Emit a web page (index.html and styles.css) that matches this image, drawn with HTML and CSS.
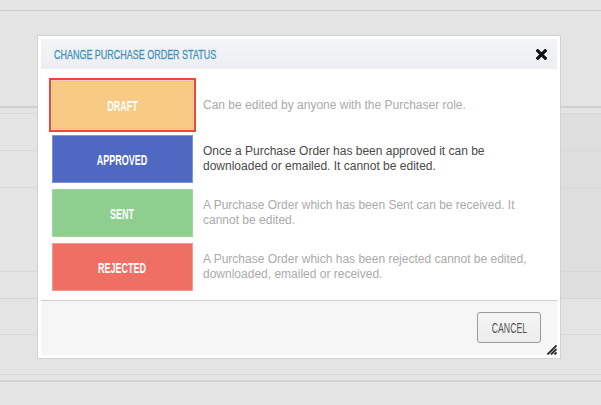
FILE: index.html
```html
<!DOCTYPE html>
<html>
<head>
<meta charset="utf-8">
<link rel="stylesheet" href="styles.css">
</head>
<body>
<div class="page">
  <div class="topbar"></div>
  <div class="band"></div>
  <div class="rows">
    <div class="row r1"></div>
    <div class="row r2"></div>
    <div class="row r3"></div>
    <div class="row r4"></div>
    <div class="row r5"></div>
    <div class="row r6"></div>
    <div class="row r7"></div>
    <div class="row r8"></div>
  </div>
  <div class="bottom"></div>
</div>

<div class="dialog">
  <div class="dialog-header">
    <span class="dialog-title">CHANGE PURCHASE ORDER STATUS</span>
    <svg class="close" width="11" height="11" viewBox="0 0 11 11"><path d="M1.8 1.8 L9.2 9.2 M9.2 1.8 L1.8 9.2" stroke="#111" stroke-width="3.2" stroke-linecap="square"/></svg>
  </div>
  <div class="dialog-body">
    <div class="status-row">
      <div class="status-btn draft selected"><span class="label">DRAFT</span></div>
      <div class="status-desc">Can be edited by anyone with the Purchaser role.</div>
    </div>
    <div class="status-row">
      <div class="status-btn approved"><span class="label">APPROVED</span></div>
      <div class="status-desc active">Once a Purchase Order has been approved it can be downloaded or emailed. It cannot be edited.</div>
    </div>
    <div class="status-row">
      <div class="status-btn sent"><span class="label">SENT</span></div>
      <div class="status-desc">A Purchase Order which has been Sent can be received. It cannot be edited.</div>
    </div>
    <div class="status-row">
      <div class="status-btn rejected"><span class="label">REJECTED</span></div>
      <div class="status-desc">A Purchase Order which has been rejected cannot be edited, downloaded, emailed or received.</div>
    </div>
  </div>
  <div class="dialog-footer">
    <button class="cancel"><span class="cancel-label">CANCEL</span></button>
  </div>
  <svg class="grip" width="12" height="12" viewBox="0 0 12 12"><path d="M11.5 2.5 L2.5 11.5 M11.5 6 L6 11.5 M11.5 9.5 L9.5 11.5" stroke="#2a2a2a" stroke-width="1.8"/></svg>
</div>
</body>
</html>
```

FILE: styles.css
```css
html, body {
  margin: 0;
  padding: 0;
}
body {
  width: 601px;
  height: 405px;
  overflow: hidden;
  background: #e4e4e4;
  position: relative;
  font-family: "Liberation Sans", Arial, sans-serif;
}
.page {
  display: flex;
  flex-direction: column;
}
.topbar {
  height: 10px;
  border-bottom: 1px solid #cbcbcb;
  background: #e4e4e4;
}
.band {
  height: 95px;
  border-bottom: 2px solid #d0d0d0;
}
.rows {
  display: flex;
  flex-direction: column;
}
.row {
  border-bottom: 1px solid #d9d9d9;
  background: #e4e4e4;
}
.r1 { height: 5px; }
.r2, .r3, .r4, .r5, .r6 { background: linear-gradient(90deg, #e4e4e4 561px, #dedede 561px); }
.r2 { height: 36px; }
.r3 { height: 36px; }
.r4 { height: 36px; border-bottom-color: transparent; }
.r5 { height: 46px; }
.r6 { height: 26px; border-bottom-color: #d6d6d6; }
.r7 { height: 35px; }
.r8 { height: 39px; }
.bottom {
  border-top: 2px solid #d2d2d2;
  margin-top: 5px;
  height: 30px;
}

.dialog {
  position: absolute;
  left: 37px;
  top: 35px;
  width: 516px;
  height: 316px;
  padding: 3px;
  background: #fff;
  border: 1px solid #d2d2d2;
  display: flex;
  flex-direction: column;
}
.dialog-header {
  height: 30px;
  flex: none;
  background: linear-gradient(#f4f5f7, #eceef1);
  display: flex;
  align-items: center;
  justify-content: space-between;
  padding: 0 10px 0 13px;
}
.dialog-title {
  display: inline-block;
  font-size: 13px;
  color: #4393bd;
  -webkit-text-stroke: 0.3px #4393bd;
  transform: scaleX(0.69);
  transform-origin: left center;
  white-space: nowrap;
}
.close {
  display: block;
}
.dialog-body {
  flex: 1;
  display: flex;
  flex-direction: column;
  gap: 6px;
  padding: 12px 0 0 11px;
}
.status-row {
  display: flex;
  align-items: center;
  gap: 10px;
}
.status-btn {
  width: 139px;
  height: 46px;
  flex: none;
  display: flex;
  align-items: center;
  justify-content: center;
  color: #fff;
}
.label {
  display: inline-block;
  font-weight: bold;
  font-size: 15px;
  transform: scaleX(0.6);
  white-space: nowrap;
}
.draft { background: #f7cb83; border: 1px solid #f5c27a; }
.draft.selected { outline: 2px solid #ea4a2e; outline-offset: 1px; box-shadow: 0 0 0 1px #fbd0c4; }
.approved { background: #4f68c1; border: 1px solid #7d94dc; }
.sent { background: #8ecf8f; border: 1px solid #9cd79d; }
.rejected { background: #f06f65; border: 1px solid #f59a92; }
.status-desc {
  font-size: 12px;
  line-height: 15px;
  color: #aaaaaa;
  width: 345px;
}
.status-desc.active { color: #4a4a4a; }

.dialog-footer {
  height: 54px;
  flex: none;
  background: #f6f6f6;
  border-top: 1px solid #cfcfcf;
  display: flex;
  align-items: flex-start;
  justify-content: flex-end;
  padding: 0 16px 0 0;
}
.cancel {
  margin-top: 11px;
  width: 64px;
  height: 31px;
  border: 1px solid #9a9a9a;
  border-radius: 3px;
  background: linear-gradient(#f6f6f6, #ececec);
  color: #555;
  font-family: "Liberation Sans", Arial, sans-serif;
  padding: 0;
}
.cancel-label {
  display: inline-block;
  font-size: 15px;
  transform: scaleX(0.58);
  white-space: nowrap;
}
.grip {
  position: absolute;
  right: 3px;
  bottom: 3px;
}
```
